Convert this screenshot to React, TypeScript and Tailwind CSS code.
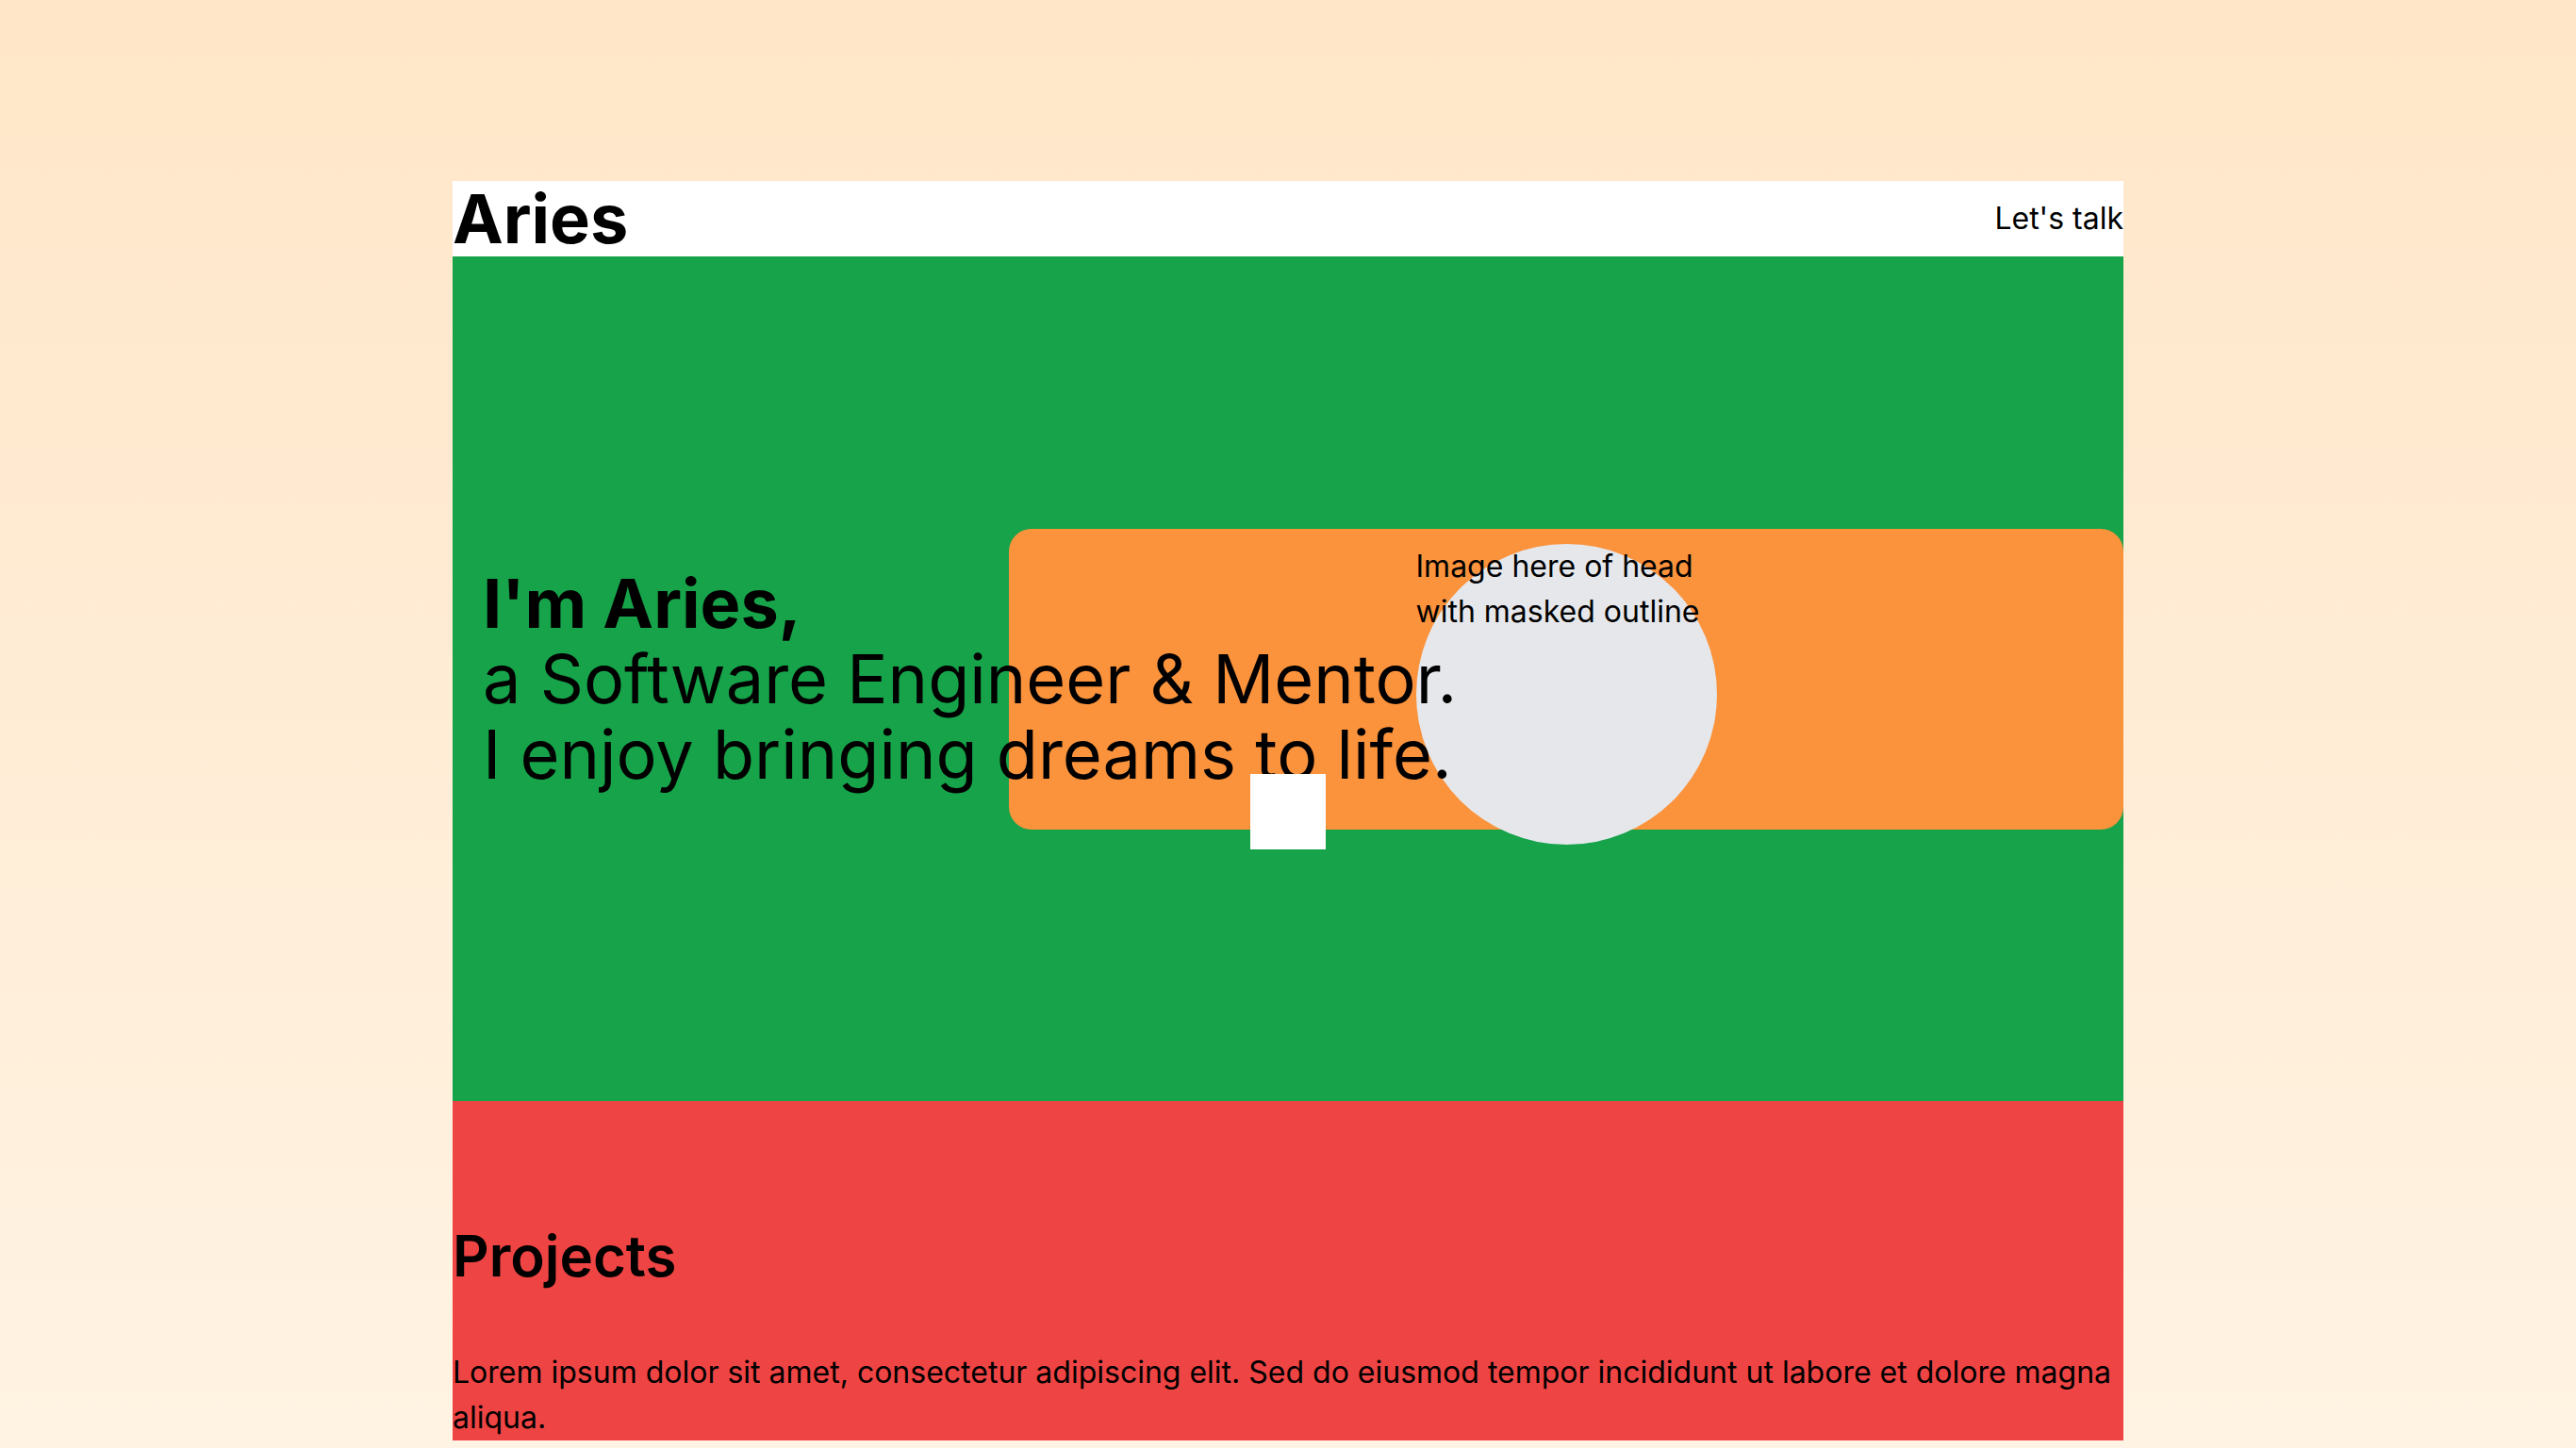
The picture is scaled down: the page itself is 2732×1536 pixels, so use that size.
import React from 'react';

export default function App() {
  return (
    <div
      className="min-h-screen bg-linear-to-b from-[#ffe6c8] to-[#fff3e3] pt-[192px] text-black"
      style={{ fontFamily: 'Inter, "Noto Sans", sans-serif' }}
    >
      <div className="mx-auto w-[1772px]">
        {/* Header */}
        <header className="flex h-20 items-center justify-between bg-white">
          <h1 className="text-[72px] font-bold leading-[80px]">Aries</h1>
          <a className="text-[32px] leading-[48px]">Let's talk</a>
        </header>

        {/* Hero */}
        <section className="relative flex h-[896px] items-center bg-[#16a34a]">
          <div className="relative z-10 w-[590px] shrink-0 whitespace-nowrap px-8 text-[72px] leading-[80px]">
            <p className="font-bold">I'm Aries,</p>
            <p>a Software Engineer &amp; Mentor.</p>
            <p>I enjoy bringing dreams to life.</p>
          </div>
          <div className="relative flex h-[319px] flex-1 justify-center rounded-3xl bg-[#fb923c]">
            <div className="mt-4 h-[319px] w-[319px] shrink-0 rounded-full bg-[#e5e7eb] text-[32px] leading-[48px]">
              Image here of head with masked outline
            </div>
            <div className="absolute left-[256px] top-[260px] z-20 h-20 w-20 bg-white" />
          </div>
        </section>

        {/* Projects */}
        <section className="bg-[#ef4444] pt-32">
          <h2 className="text-[60px] font-semibold leading-[72px]">Projects</h2>
          <p className="mt-16 text-[32px] leading-[48px]">
            Lorem ipsum dolor sit amet, consectetur adipiscing elit. Sed do eiusmod tempor incididunt ut labore et dolore magna aliqua.
          </p>
        </section>
      </div>
    </div>
  );
}
